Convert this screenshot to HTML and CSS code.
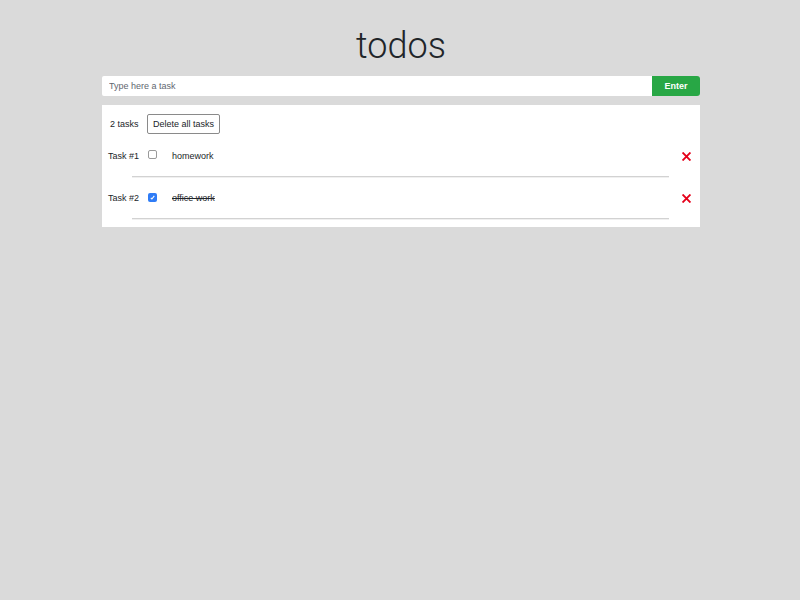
FILE: index.html
```html
<!DOCTYPE html>
<html>
<head>
<meta charset="utf-8">
<link rel="stylesheet" href="styles.css">
</head>
<body>
<div class="app">
  <h1 class="title">todos</h1>
  <form class="entry">
    <input class="entry-input" type="text" placeholder="Type here a task">
    <button class="entry-btn" type="button">Enter</button>
  </form>
  <div class="panel">
    <div class="panel-head">
      <span class="count">2 tasks</span>
      <button class="clear-btn" type="button">Delete all tasks</button>
    </div>
    <div class="task">
      <div class="task-row">
        <span class="task-num">Task #1</span>
        <span class="check"></span>
        <span class="task-text">homework</span>
        <svg class="del" width="9" height="9" viewBox="0 0 9 9"><path d="M1.2 1.2L7.8 7.8M7.8 1.2L1.2 7.8" stroke="#e5001a" stroke-width="1.9" stroke-linecap="square"/></svg>
      </div>
      <div class="task-line"></div>
    </div>
    <div class="task">
      <div class="task-row">
        <span class="task-num">Task #2</span>
        <span class="check checked"><svg width="9" height="9" viewBox="0 0 9 9"><path d="M2.8 4.8L3.9 6L6.3 2.8" fill="none" stroke="#fff" stroke-width="1.1"/></svg></span>
        <span class="task-text done">office work</span>
        <svg class="del" width="9" height="9" viewBox="0 0 9 9"><path d="M1.2 1.2L7.8 7.8M7.8 1.2L1.2 7.8" stroke="#e5001a" stroke-width="1.9" stroke-linecap="square"/></svg>
      </div>
      <div class="task-line"></div>
    </div>
  </div>
</div>
</body>
</html>
```
FILE: styles.css
```css
html, body {
  margin: 0;
  padding: 0;
  background: #dadada;
  font-family: "Liberation Sans", Arial, sans-serif;
  font-size: 9px;
  color: #212529;
}
.app {
  width: 598px;
  margin-left: calc(50% - 298px);
}
.title {
  margin: 0;
  padding-top: 24px;
  height: 76px;
  box-sizing: border-box;
  text-align: center;
  font-family: Roboto, "Liberation Sans", sans-serif;
  font-weight: 300;
  font-size: 36px;
  line-height: 44px;
  color: #212529;
}
.entry {
  display: flex;
  height: 20px;
  margin: 0;
}
.entry-input {
  flex: 1;
  border: none;
  outline: none;
  margin: 0;
  padding: 0 7px;
  height: 20px;
  font-family: inherit;
  font-size: 9px;
  background: #fff;
  border-radius: 2px 0 0 2px;
}
.entry-input::placeholder {
  color: #5f6770;
}
.entry-btn {
  width: 48px;
  height: 20px;
  border: none;
  margin: 0;
  padding: 0;
  background: #28a745;
  color: #fff;
  font-family: inherit;
  font-size: 9px;
  font-weight: bold;
  border-radius: 0 3px 3px 0;
}
.panel {
  margin-top: 9px;
  background: #fff;
  padding: 9px 0 7px;
}
.panel-head {
  display: flex;
  align-items: center;
  height: 20px;
  padding-left: 8px;
  margin-bottom: 12px;
}
.count {
  width: 37px;
}
.clear-btn {
  height: 20px;
  padding: 0 5px;
  border: 1px solid #8a8a8a;
  border-radius: 2px;
  background: #fff;
  font-family: inherit;
  font-size: 9px;
  color: #212529;
}
.task + .task {
  margin-top: 10px;
}
.task-row {
  display: flex;
  align-items: center;
  height: 20px;
  padding-left: 6px;
  padding-right: 9px;
}
.task-num {
  width: 40px;
}
.check {
  width: 7px;
  height: 7px;
  border: 1px solid #9a9a9a;
  border-radius: 2px;
  margin-bottom: 3px;
  display: flex;
}
.check.checked {
  width: 9px;
  height: 9px;
  border: none;
  background: #2f7cf6;
  margin-bottom: 2px;
}
.task-text {
  margin-left: 15px;
  flex: 1;
}
.task-text.done {
  text-decoration: line-through;
}
.del {
  display: block;
}
.task-line {
  margin: 10px 31px 0 30px;
  border-top: 1px solid #d2d2d2;
  border-bottom: 1px solid #f0f0f0;
}
```
